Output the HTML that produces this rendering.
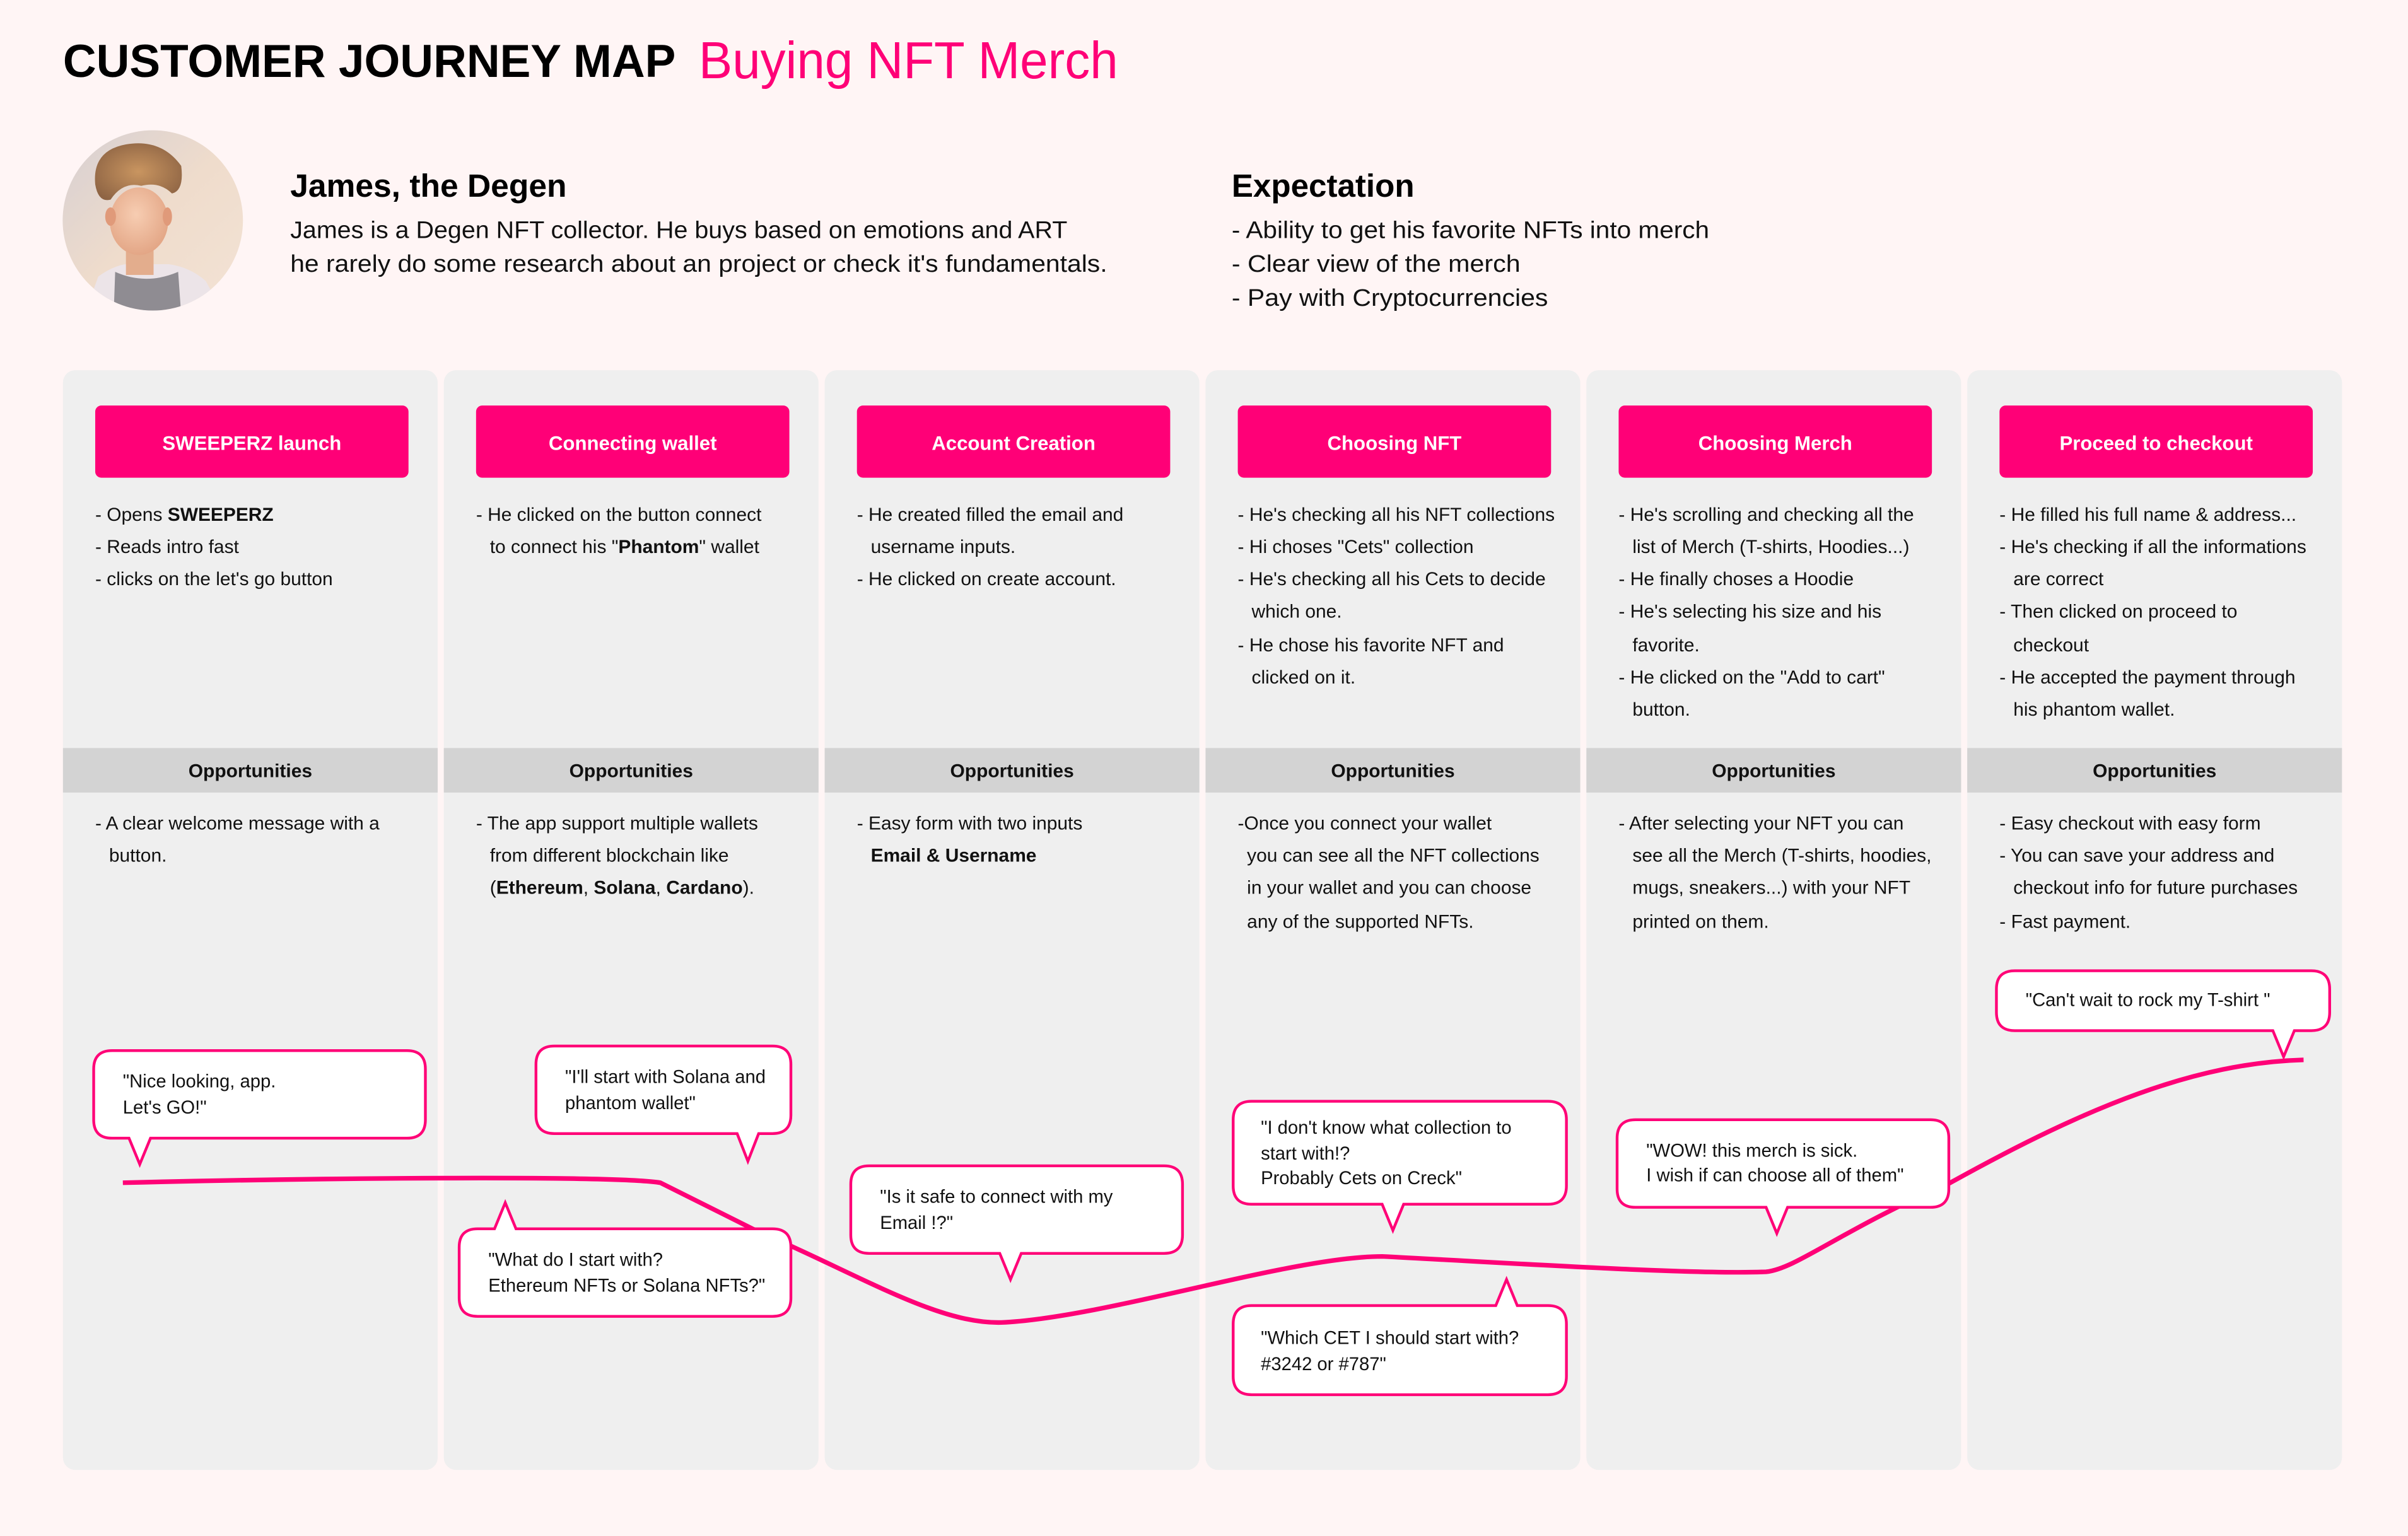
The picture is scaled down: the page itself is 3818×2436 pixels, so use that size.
<!DOCTYPE html>
<html><head><meta charset="utf-8"><style>
html,body{margin:0;padding:0;background:#fff5f5;}
svg{display:block}
text{font-family:"Liberation Sans",sans-serif;}
.b{font-size:12.3px;fill:#111}
.bb{font-weight:bold}
.btn{font-size:12.8px;font-weight:bold;fill:#fff}
.op{font-size:12.3px;font-weight:bold;fill:#111}
.q{font-size:12px;fill:#111}
</style></head><body>
<svg width="3818" height="2436" viewBox="0 0 1568 1000" preserveAspectRatio="none" xmlns="http://www.w3.org/2000/svg">
<defs>
<clipPath id="av"><circle cx="99.5" cy="143.5" r="58.7"/></clipPath>
<linearGradient id="sky" x1="0" y1="0" x2="1" y2="1"><stop offset="0" stop-color="#d6cfd2"/><stop offset="0.5" stop-color="#efdccc"/><stop offset="1" stop-color="#f3e3d5"/></linearGradient>
<radialGradient id="skin" cx="0.45" cy="0.4" r="0.7"><stop offset="0" stop-color="#f7cdb2"/><stop offset="1" stop-color="#e0a07f"/></radialGradient>
<radialGradient id="hair" cx="0.5" cy="0.5" r="0.6"><stop offset="0" stop-color="#c99560"/><stop offset="1" stop-color="#8e6444"/></radialGradient>
</defs>
<rect width="1568" height="1000" fill="#fff5f5"/>

<text x="41" y="50" style="font-size:30px;font-weight:bold;fill:#000" textLength="399" lengthAdjust="spacingAndGlyphs">CUSTOMER JOURNEY MAP</text>
<text x="455" y="51" style="font-size:34px;fill:#ff0077" textLength="273" lengthAdjust="spacingAndGlyphs">Buying NFT Merch</text>

<g clip-path="url(#av)">
<rect x="40" y="84" width="120" height="120" fill="url(#sky)"/>
<path d="M55,205 L64,180 Q78,170 90,172 L110,172 Q124,174 134,183 L146,205Z" fill="#ece4e8"/>
<path d="M74,205 L75,177 Q95,186 116,177 L118,205Z" fill="#8f8c92"/>
<rect x="82" y="155" width="18" height="24" fill="#e3ad8d"/>
<ellipse cx="90.5" cy="144" rx="19" ry="22" fill="url(#skin)"/>
<ellipse cx="72" cy="141" rx="3.5" ry="6" fill="#e09a7a"/>
<ellipse cx="109" cy="141" rx="3" ry="6" fill="#e09a7a"/>
<path d="M62,120 Q60,98 82,94 Q105,90 118,108 Q120,124 112,126 Q104,118 92,121 Q80,118 72,130 Q64,132 62,120Z" fill="url(#hair)"/>
</g>

<text x="189" y="128" style="font-size:21px;font-weight:bold;fill:#000" textLength="180" lengthAdjust="spacingAndGlyphs">James, the Degen</text>
<text x="189" y="155" style="font-size:15.6px;fill:#111" textLength="506" lengthAdjust="spacingAndGlyphs">James is a Degen NFT collector. He buys based on emotions and ART</text>
<text x="189" y="177" style="font-size:15.6px;fill:#111" textLength="532" lengthAdjust="spacingAndGlyphs">he rarely do some research about an project or check it's fundamentals.</text>
<text x="802" y="128" style="font-size:21px;font-weight:bold;fill:#000" textLength="119" lengthAdjust="spacingAndGlyphs">Expectation</text>
<text x="802" y="155" style="font-size:15.6px;fill:#111" textLength="311" lengthAdjust="spacingAndGlyphs">- Ability to get his favorite NFTs into merch</text>
<text x="802" y="177" style="font-size:15.6px;fill:#111" textLength="188" lengthAdjust="spacingAndGlyphs">- Clear view of the merch</text>
<text x="802" y="199" style="font-size:15.6px;fill:#111" textLength="206" lengthAdjust="spacingAndGlyphs">- Pay with Cryptocurrencies</text>

<g fill="#efefef">
<rect x="41" y="241" width="244" height="716" rx="8"/>
<rect x="289" y="241" width="244" height="716" rx="8"/>
<rect x="537" y="241" width="244" height="716" rx="8"/>
<rect x="785" y="241" width="244" height="716" rx="8"/>
<rect x="1033" y="241" width="244" height="716" rx="8"/>
<rect x="1281" y="241" width="244" height="716" rx="8"/>
</g>
<g fill="#d3d3d3">
<rect x="41" y="487" width="244" height="29"/>
<rect x="289" y="487" width="244" height="29"/>
<rect x="537" y="487" width="244" height="29"/>
<rect x="785" y="487" width="244" height="29"/>
<rect x="1033" y="487" width="244" height="29"/>
<rect x="1281" y="487" width="244" height="29"/>
</g>
<g fill="#ff0077">
<rect x="62" y="264" width="204" height="47" rx="4"/>
<rect x="310" y="264" width="204" height="47" rx="4"/>
<rect x="558" y="264" width="204" height="47" rx="4"/>
<rect x="806" y="264" width="204" height="47" rx="4"/>
<rect x="1054" y="264" width="204" height="47" rx="4"/>
<rect x="1302" y="264" width="204" height="47" rx="4"/>
</g>
<g class="btn" text-anchor="middle">
<text x="164" y="293">SWEEPERZ launch</text>
<text x="412" y="293">Connecting wallet</text>
<text x="660" y="293">Account Creation</text>
<text x="908" y="293">Choosing NFT</text>
<text x="1156" y="293">Choosing Merch</text>
<text x="1404" y="293">Proceed to checkout</text>
</g>
<g class="op" text-anchor="middle">
<text x="163" y="506">Opportunities</text>
<text x="411" y="506">Opportunities</text>
<text x="659" y="506">Opportunities</text>
<text x="907" y="506">Opportunities</text>
<text x="1155" y="506">Opportunities</text>
<text x="1403" y="506">Opportunities</text>
</g>

<g class="b">
<text x="62" y="339">- Opens <tspan class="bb">SWEEPERZ</tspan></text>
<text x="62" y="360">- Reads intro fast</text>
<text x="62" y="381">- clicks on the let's go button</text>
<text x="62" y="540">- A clear welcome message with a</text>
<text x="71" y="561">button.</text>
<text x="310" y="339">- He clicked on the button connect</text>
<text x="319" y="360">to connect his "<tspan class="bb">Phantom</tspan>" wallet</text>
<text x="310" y="540">- The app support multiple wallets</text>
<text x="319" y="561">from different blockchain like</text>
<text x="319" y="582">(<tspan class="bb">Ethereum</tspan>, <tspan class="bb">Solana</tspan>, <tspan class="bb">Cardano</tspan>).</text>
<text x="558" y="339">- He created filled the email and</text>
<text x="567" y="360">username inputs.</text>
<text x="558" y="381">- He clicked on create account.</text>
<text x="558" y="540">- Easy form with two inputs</text>
<text x="567" y="561" class="bb">Email &amp; Username</text>
<text x="806" y="339">- He's checking all his NFT collections</text>
<text x="806" y="360">- Hi choses "Cets" collection</text>
<text x="806" y="381">- He's checking all his Cets to decide</text>
<text x="815" y="402">which one.</text>
<text x="806" y="424">- He chose his favorite NFT and</text>
<text x="815" y="445">clicked on it.</text>
<text x="806" y="540">-Once you connect your wallet</text>
<text x="812" y="561">you can see all the NFT collections</text>
<text x="812" y="582">in your wallet and you can choose</text>
<text x="812" y="604">any of the supported NFTs.</text>
<text x="1054" y="339">- He's scrolling and checking all the</text>
<text x="1063" y="360">list of Merch (T-shirts, Hoodies...)</text>
<text x="1054" y="381">- He finally choses a Hoodie</text>
<text x="1054" y="402">- He's selecting his size and his</text>
<text x="1063" y="424">favorite.</text>
<text x="1054" y="445">- He clicked on the "Add to cart"</text>
<text x="1063" y="466">button.</text>
<text x="1054" y="540">- After selecting your NFT you can</text>
<text x="1063" y="561">see all the Merch (T-shirts, hoodies,</text>
<text x="1063" y="582">mugs, sneakers...) with your NFT</text>
<text x="1063" y="604">printed on them.</text>
<text x="1302" y="339">- He filled his full name &amp; address...</text>
<text x="1302" y="360">- He's checking if all the informations</text>
<text x="1311" y="381">are correct</text>
<text x="1302" y="402">- Then clicked on proceed to</text>
<text x="1311" y="424">checkout</text>
<text x="1302" y="445">- He accepted the payment through</text>
<text x="1311" y="466">his phantom wallet.</text>
<text x="1302" y="540">- Easy checkout with easy form</text>
<text x="1302" y="561">- You can save your address and</text>
<text x="1311" y="582">checkout info for future purchases</text>
<text x="1302" y="604">- Fast payment.</text>
</g>

<path d="M80,770 C200,767 400,765 430,770 L490,800 C560,830 610,862 652,861 C720,858 840,818 900,818 C980,822 1100,830 1150,828 C1170,826 1200,800 1270,770 C1360,720 1430,692 1500,690" fill="none" stroke="#ff0077" stroke-width="3"/>

<g fill="#fff" stroke="#ff0077" stroke-width="1.8" stroke-linejoin="miter">
<path d="M73,684 H265 Q277,684 277,696 V729 Q277,741 265,741 H98 L91,758 L84,741 H73 Q61,741 61,729 V696 Q61,684 73,684Z"/>
<path d="M361,681 H503 Q515,681 515,693 V726 Q515,738 503,738 H494 L487,756 L480,738 H361 Q349,738 349,726 V693 Q349,681 361,681Z"/>
<path d="M311,800 H322 L329,783 L336,800 H503 Q515,800 515,812 V845 Q515,857 503,857 H311 Q299,857 299,845 V812 Q299,800 311,800Z"/>
<path d="M566,759 H758 Q770,759 770,771 V804 Q770,816 758,816 H665 L658,833 L651,816 H566 Q554,816 554,804 V771 Q554,759 566,759Z"/>
<path d="M815,717 H1008 Q1020,717 1020,729 V772 Q1020,784 1008,784 H914 L907,801 L900,784 H815 Q803,784 803,772 V729 Q803,717 815,717Z"/>
<path d="M815,850 H974 L981,833 L988,850 H1008 Q1020,850 1020,862 V896 Q1020,908 1008,908 H815 Q803,908 803,896 V862 Q803,850 815,850Z"/>
<path d="M1065,729 H1257 Q1269,729 1269,741 V774 Q1269,786 1257,786 H1164 L1157,803 L1150,786 H1065 Q1053,786 1053,774 V741 Q1053,729 1065,729Z"/>
<path d="M1312,632 H1505 Q1517,632 1517,644 V659 Q1517,671 1505,671 H1494 L1487,688 L1480,671 H1312 Q1300,671 1300,659 V644 Q1300,632 1312,632Z"/>
</g>
<g class="q">
<text x="80" y="708">"Nice looking, app.</text>
<text x="80" y="725">Let's GO!"</text>
<text x="368" y="705">"I'll start with Solana and</text>
<text x="368" y="722">phantom wallet"</text>
<text x="318" y="824">"What do I start with?</text>
<text x="318" y="841">Ethereum NFTs or Solana NFTs?"</text>
<text x="573" y="783">"Is it safe to connect with my</text>
<text x="573" y="800">Email !?"</text>
<text x="821" y="738">"I don't know what collection to</text>
<text x="821" y="755">start with!?</text>
<text x="821" y="771">Probably Cets on Creck"</text>
<text x="821" y="875">"Which CET I should start with?</text>
<text x="821" y="892">#3242 or #787"</text>
<text x="1072" y="753">"WOW! this merch is sick.</text>
<text x="1072" y="769">I wish if can choose all of them"</text>
<text x="1319" y="655">"Can't wait to rock my T-shirt "</text>
</g>
</svg>
</body></html>
